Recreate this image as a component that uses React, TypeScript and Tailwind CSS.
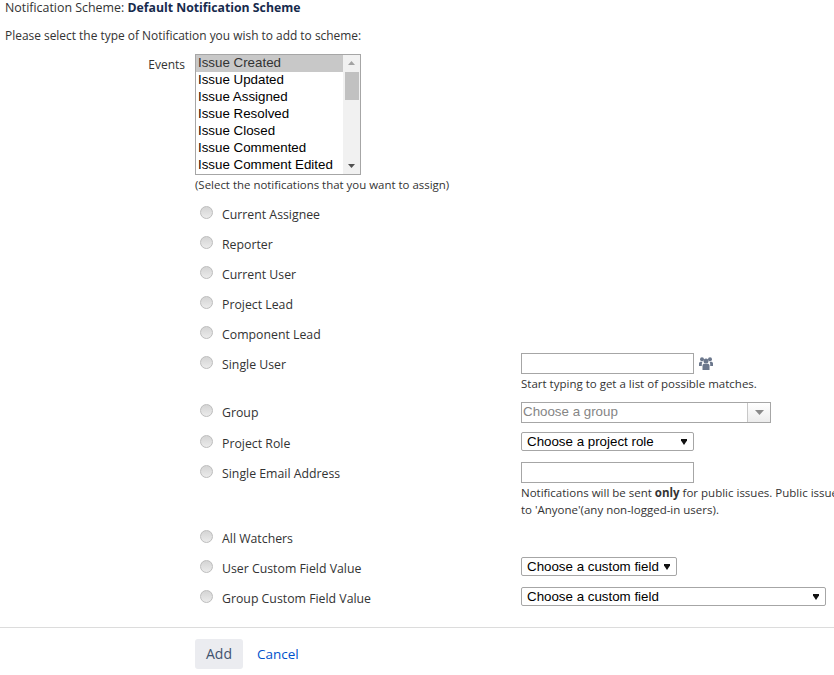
import React from 'react';

const events = [
  'Issue Created',
  'Issue Updated',
  'Issue Assigned',
  'Issue Resolved',
  'Issue Closed',
  'Issue Commented',
  'Issue Comment Edited',
];

const Radio = () => (
  <span className="mt-[3px] block h-[13px] w-[13px] shrink-0 rounded-full border border-[#bdbdbd] bg-gradient-to-b from-[#d4d4d4] to-[#ebebeb]" />
);

// one notification type: radio, label and the optional field on the right
const Row = ({ label, height, children }: { label: string; height: number; children?: React.ReactNode }) => (
  <div className="flex pl-[200px]" style={{ height }}>
    <Radio />
    <label className="w-[308px] shrink-0 pl-[9px] pt-[2px] text-[12.3px] leading-[20px]">{label}</label>
    <div className="min-w-0 flex-1">{children}</div>
  </div>
);

const NativeSelect = ({ label, width }: { label: string; width: string }) => (
  <div className={`flex h-[19px] items-center justify-between rounded-[2px] border border-[#a6a6a6] bg-white pl-[5px] pr-[6px] font-['Liberation_Sans',sans-serif] text-[13.33px] leading-none whitespace-nowrap text-black ${width}`}>
    <span>{label}</span>
    <svg width="6" height="6" viewBox="0 0 6 6">
      <path d="M0 0h6v1.500L3 6 0 1.500z" fill="#111" />
    </svg>
  </div>
);

const TextBox = () => <div className="h-[21px] w-[173px] border border-[#a6a6a6] bg-white" />;

const Helper = ({ children }: { children: React.ReactNode }) => (
  <div className="whitespace-nowrap text-[11.5px] leading-[17px]">{children}</div>
);

function App() {
  return (
    <div className="h-[675px] w-[834px] overflow-hidden bg-white font-['Open_Sans',sans-serif] text-[12px] text-[#333]">
      <div className="pl-[5px] leading-[15px] text-[12.4px] text-[#333]">
        Notification Scheme: <b className="text-[12.25px] font-bold text-[#172b4d]">Default Notification Scheme</b>
      </div>
      <div className="pl-[5px] pt-[13px] text-[11.93px] leading-[15px]">Please select the type of Notification you wish to add to scheme:</div>

      <div className="mt-[11px] flex">
        <div className="w-[185px] pt-[2px] text-right leading-[17px]">Events</div>
        <div className="ml-[10px]">
          <div className="flex h-[121px] w-[166px] border border-[#a6a6a6] bg-white font-['Liberation_Sans',sans-serif] text-[13.33px] leading-[16px] text-black">
            <ul className="flex-1">
              {events.map((ev, i) => (
                <li key={ev} className={i === 0 ? 'bg-[#c8c8c8] pb-[1px] pl-[2px] text-[#333]' : 'pb-[1px] pl-[2px]'}>
                  {ev}
                </li>
              ))}
            </ul>
            <div className="flex w-[17px] flex-col items-center bg-[#f1f1f1]">
              <svg width="17" height="17" viewBox="0 0 17 17">
                <path d="M5 10l3.5-4 3.5 4z" fill="#a3a3a3" />
              </svg>
              <div className="h-[28px] w-[14px] bg-[#c1c1c1]" />
              <svg className="mt-auto" width="17" height="17" viewBox="0 0 17 17">
                <path d="M5 7l3.5 4 3.5-4z" fill="#505050" />
              </svg>
            </div>
          </div>
          <div className="pt-[1px] text-[11.45px] leading-[17px]">(Select the notifications that you want to assign)</div>
        </div>
      </div>

      <div className="mt-[10px]">
        <Row label="Current Assignee" height={30} />
        <Row label="Reporter" height={30} />
        <Row label="Current User" height={30} />
        <Row label="Project Lead" height={30} />
        <Row label="Component Lead" height={30} />
        <Row label="Single User" height={48}>
          <div className="flex items-center">
            <TextBox />
            <svg className="ml-[5px] -mt-[1px]" width="14" height="13" viewBox="0 0 14 13">
              <g fill="#6b778c">
                <circle cx="3" cy="2.300" r="2" />
                <circle cx="11" cy="2.300" r="2" />
                <path d="M0 9V6.500C0 5.200 1 4.700 2 4.700h1.500C3 5.500 2.800 6.200 2.800 7v2zM14 9V6.500C14 5.200 13 4.700 12 4.700h-1.500C11 5.500 11.200 6.200 11.200 7v2z" />
                <circle cx="7" cy="4" r="2.500" />
                <path d="M3.500 13V8.700C3.500 7.400 4.500 6.800 5.500 6.800h3C9.500 6.800 10.500 7.400 10.500 8.700V13z" />
              </g>
            </svg>
          </div>
          <div className="pt-[1px]">
            <Helper>Start typing to get a list of possible matches.</Helper>
          </div>
        </Row>
        <Row label="Group" height={31}>
          <div className="mt-[1px] flex h-[21px] w-[250px] items-center border border-[#a6a6a6] bg-white pb-[1px] font-['Liberation_Sans',sans-serif] text-[13.33px] text-[#858585]">
            <span className="flex-1 pl-[1px]">Choose a group</span>
            <span className="-mb-[1px] flex h-[19px] w-[23px] items-center justify-center border-l border-[#c8c8c8] bg-gradient-to-b from-white to-[#ececec]">
              <svg width="9" height="5" viewBox="0 0 9 5">
                <path d="M0 0h9L4.500 5z" fill="#8a8a8a" />
              </svg>
            </span>
          </div>
        </Row>
        <Row label="Project Role" height={30}>
          <NativeSelect label="Choose a project role" width="w-[173px]" />
        </Row>
        <Row label="Single Email Address" height={65}>
          <TextBox />
          <div className="pt-[1px]">
            <Helper>
              Notifications will be sent <b className="font-bold">only</b> for public issues. Public issues are issues that have the permission set
            </Helper>
            <Helper>to 'Anyone'(any non-logged-in users).</Helper>
          </div>
        </Row>
        <Row label="All Watchers" height={30} />
        <Row label="User Custom Field Value" height={30}>
          <NativeSelect label="Choose a custom field" width="w-[156px]" />
        </Row>
        <Row label="Group Custom Field Value" height={30}>
          <NativeSelect label="Choose a custom field" width="w-[305px]" />
        </Row>
      </div>

      <div className="mt-[10px] flex items-center border-t border-[#dcdcdc] pl-[195px] pt-[11px]">
        <button className="h-[30px] w-[48px] rounded-[3px] bg-[#ebecf0] pb-[2px] text-[14px] text-[#42526e]">Add</button>
        <a className="ml-[14px] text-[13.5px] text-[#0052cc]">Cancel</a>
      </div>
    </div>
  );
}

export default App;
